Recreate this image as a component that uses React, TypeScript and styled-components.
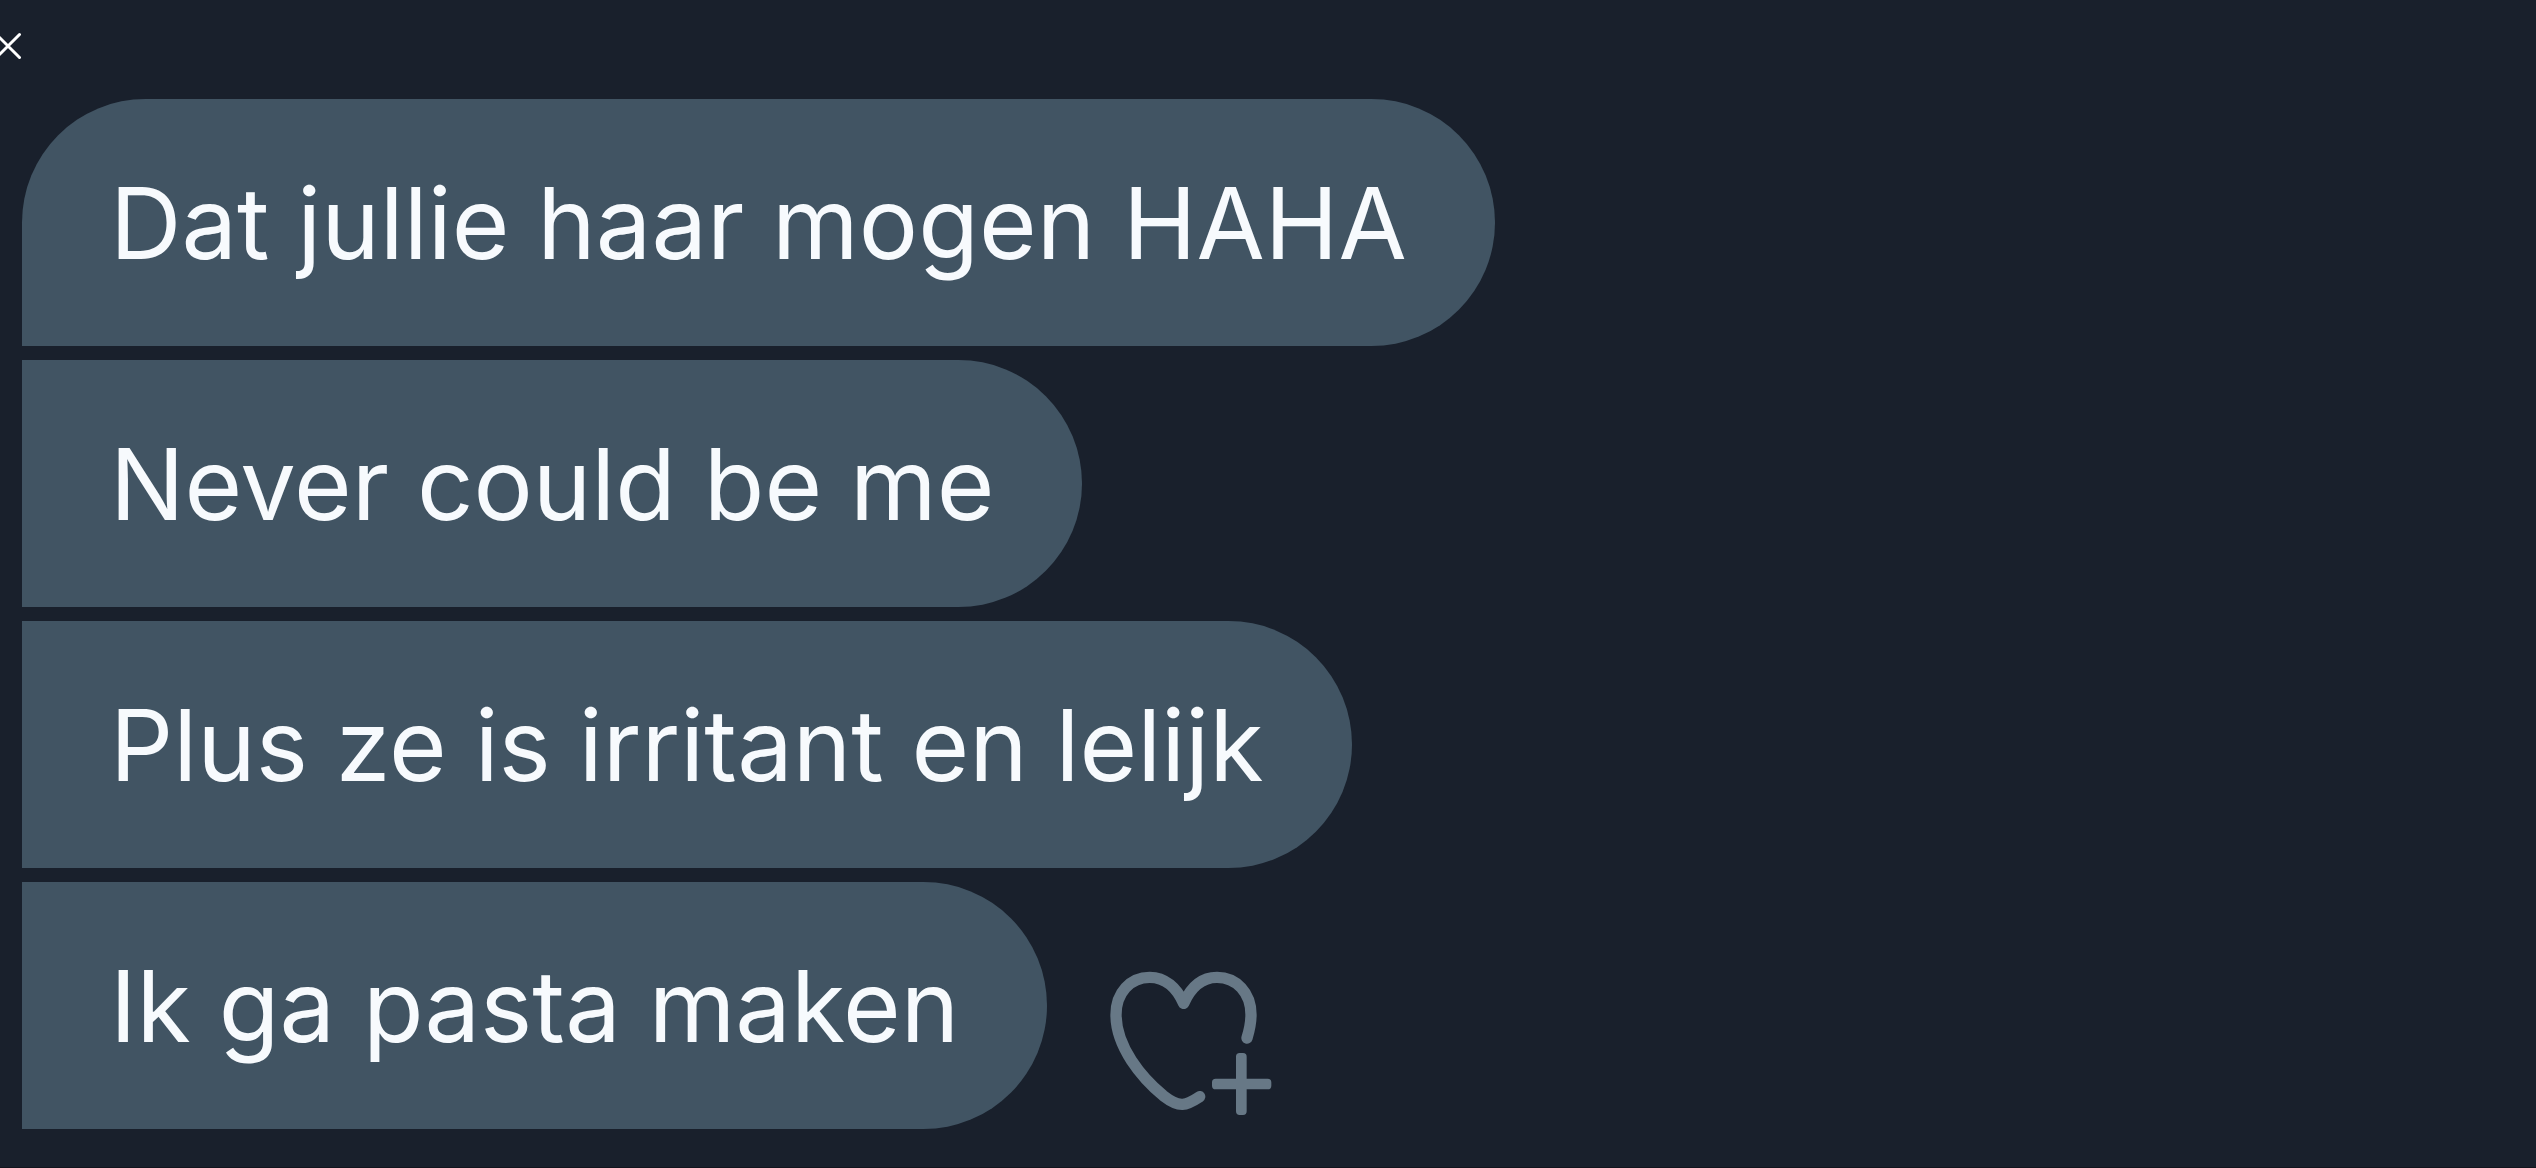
import React from "react";
import styled, { createGlobalStyle } from "styled-components";

const GlobalStyle = createGlobalStyle`
  body {
    margin: 0;
    background: #19202c;
    overflow: hidden;
  }
`;

const Screen = styled.main`
  box-sizing: border-box;
  min-height: 100vh;
  background: #19202c;
  border-bottom: 1px solid #12141d;
  font-family: Inter, "Liberation Sans", sans-serif;
`;

const TopBar = styled.header`
  display: flex;
  align-items: center;
  height: 92px;
  padding-bottom: 7px;
`;

const IconButton = styled.button`
  display: flex;
  flex: none;
  padding: 0;
  border: 0;
  background: none;
  cursor: pointer;
`;

const CloseButton = styled(IconButton)`
  margin-left: -6px;
`;

const ReactButton = styled(IconButton)`
  align-self: flex-end;
  margin-bottom: 13px;
`;

const Messages = styled.ul`
  display: flex;
  flex-direction: column;
  gap: 14px;
  margin: 0;
  padding: 0 22px;
  list-style: none;
`;

const Row = styled.li`
  display: flex;
  gap: 62px;
`;

const Bubble = styled.p<{ $first: boolean }>`
  margin: 0;
  padding: 62px 88px 61px;
  border-radius: ${(p) => (p.$first ? "124px" : "0")} 124px 124px 0;
  background: #415463;
  color: #f7fafd;
  font-size: 99px;
  line-height: 124px;
`;

const messages = [
  "Dat jullie haar mogen HAHA",
  "Never could be me",
  "Plus ze is irritant en lelijk",
  "Ik ga pasta maken",
];

function CloseIcon() {
  return (
    <svg width="28" height="28" viewBox="0 0 28 28" fill="none" stroke="#fff" strokeWidth="3" strokeLinecap="round">
      <path d="M2.5 2.5 25.5 25.5M25.5 2.5 2.5 25.5" />
    </svg>
  );
}

function HeartPlusIcon() {
  return (
    <svg
      width="164"
      height="146"
      viewBox="90 90 492 438"
      fill="none"
      stroke="#677886"
      strokeWidth="34"
      strokeLinecap="round"
      strokeLinejoin="round"
    >
      <path d="M504 294C512 268 516 248 516 224C516 158 472 112 414 112C368 112 335 143 314 190C293 143 258 112 212 112C154 112 111 158 111 224C111 321 188 413 253 467C302 505 321 497 362 470" />
      <path strokeWidth="22" d="M410 427H566V437H410ZM482 350H492V514H482Z" />
    </svg>
  );
}

export default function App() {
  return (
    <>
      <GlobalStyle />
      <Screen>
        <TopBar>
          <CloseButton type="button" aria-label="Sluiten">
            <CloseIcon />
          </CloseButton>
        </TopBar>
        <Messages>
          {messages.map((text, i) => (
            <Row key={text}>
              <Bubble $first={i === 0}>{text}</Bubble>
              {i === messages.length - 1 && (
                <ReactButton type="button" aria-label="Reageren">
                  <HeartPlusIcon />
                </ReactButton>
              )}
            </Row>
          ))}
        </Messages>
      </Screen>
    </>
  );
}
